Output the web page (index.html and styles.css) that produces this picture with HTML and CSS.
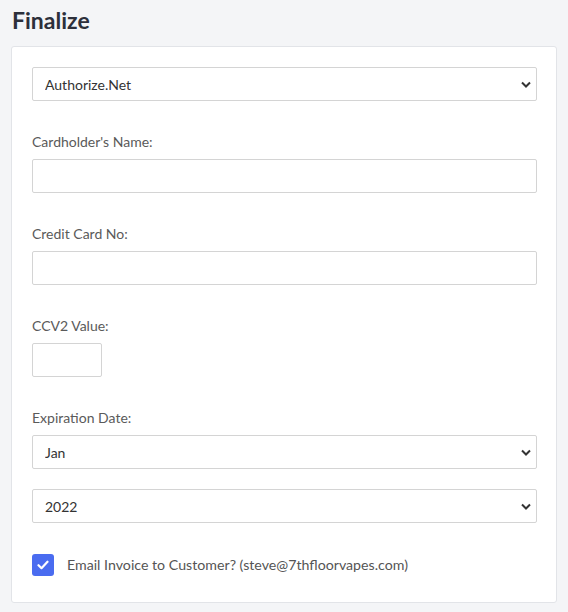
FILE: index.html
```html
<!DOCTYPE html>
<html lang="en">

<head>
    <meta charset="UTF-8">
    <meta name="viewport" content="width=device-width, initial-scale=1.0">
    <title>Finalize</title>
    <link rel="stylesheet" href="styles.css">
</head>

<body>

    <h2 class="page-title">Finalize</h2>

    <div class="card">
        <div class="field">
            <select class="control">
                <option>Authorize.Net</option>
                <option>PayPal</option>
            </select>
        </div>

        <div class="field">
            <label for="cardName">Cardholder's Name:</label>
            <input type="text" id="cardName" class="control">
        </div>

        <div class="field">
            <label for="cardNo">Credit Card No:</label>
            <input type="text" id="cardNo" class="control">
        </div>

        <div class="field">
            <label for="ccv">CCV2 Value:</label>
            <input type="text" id="ccv" class="control small">
        </div>

        <div class="field tight">
            <label for="expMonth">Expiration Date:</label>
            <select id="expMonth" class="control">
                <option>Jan</option>
                <option>Feb</option>
                <option>Mar</option>
            </select>
        </div>

        <div class="field">
            <select class="control">
                <option>2022</option>
                <option>2023</option>
                <option>2024</option>
            </select>
        </div>

        <label class="check">
            <span class="box">
                <svg width="12" height="10" viewBox="0 0 12 10"><path d="M1.5 5.2l3 3 6-6.5" fill="none" stroke="#fff" stroke-width="2.2" stroke-linecap="round" stroke-linejoin="round"/></svg>
            </span>
            Email Invoice to Customer? (steve@7thfloorvapes.com)
        </label>
    </div>

</body>

</html>
```

FILE: styles.css
```css
body {
    margin: 0;
    padding: 0 11px;
    font-family: Lato, "Open Sans", sans-serif;
    font-size: 14px;
    background-color: #f4f5f7;
    color: #555;
}

.page-title {
    margin: 0;
    padding: 6px 0 0 1px;
    height: 46px;
    box-sizing: border-box;
    font-size: 23px;
    font-weight: bold;
    color: #2d303b;
    line-height: 28px;
}

.card {
    background-color: #fff;
    border: 1px solid #e2e4e8;
    border-radius: 3px;
    padding: 20px 19px 26px 20px;
}

.field {
    margin-bottom: 31px;
}

.field.tight {
    margin-bottom: 20px;
}

.field label {
    display: block;
    line-height: 20px;
    margin-bottom: 7px;
    color: #5a5a5a;
}

.control {
    display: block;
    width: 100%;
    height: 34px;
    box-sizing: border-box;
    padding: 0 12px;
    font-family: inherit;
    font-size: 14px;
    color: #333;
    background-color: #fff;
    border: 1px solid #d4d4d4;
    border-radius: 2px;
    outline: none;
}

.control.small {
    width: 70px;
}

select.control {
    appearance: none;
    -webkit-appearance: none;
    background-image: url("data:image/svg+xml,%3Csvg xmlns='http://www.w3.org/2000/svg' width='10' height='7' viewBox='0 0 10 7'%3E%3Cpath d='M1 1.5l4 4 4-4' fill='none' stroke='%23333' stroke-width='2'/%3E%3C/svg%3E");
    background-repeat: no-repeat;
    background-position: right 5px center;
}

.check {
    display: flex;
    align-items: center;
    gap: 13px;
    color: #555;
    line-height: 22px;
    font-size: 14.2px;
}

.check .box {
    width: 22px;
    height: 22px;
    border-radius: 3px;
    background-color: #4a6cf0;
    display: flex;
    align-items: center;
    justify-content: center;
}
```
